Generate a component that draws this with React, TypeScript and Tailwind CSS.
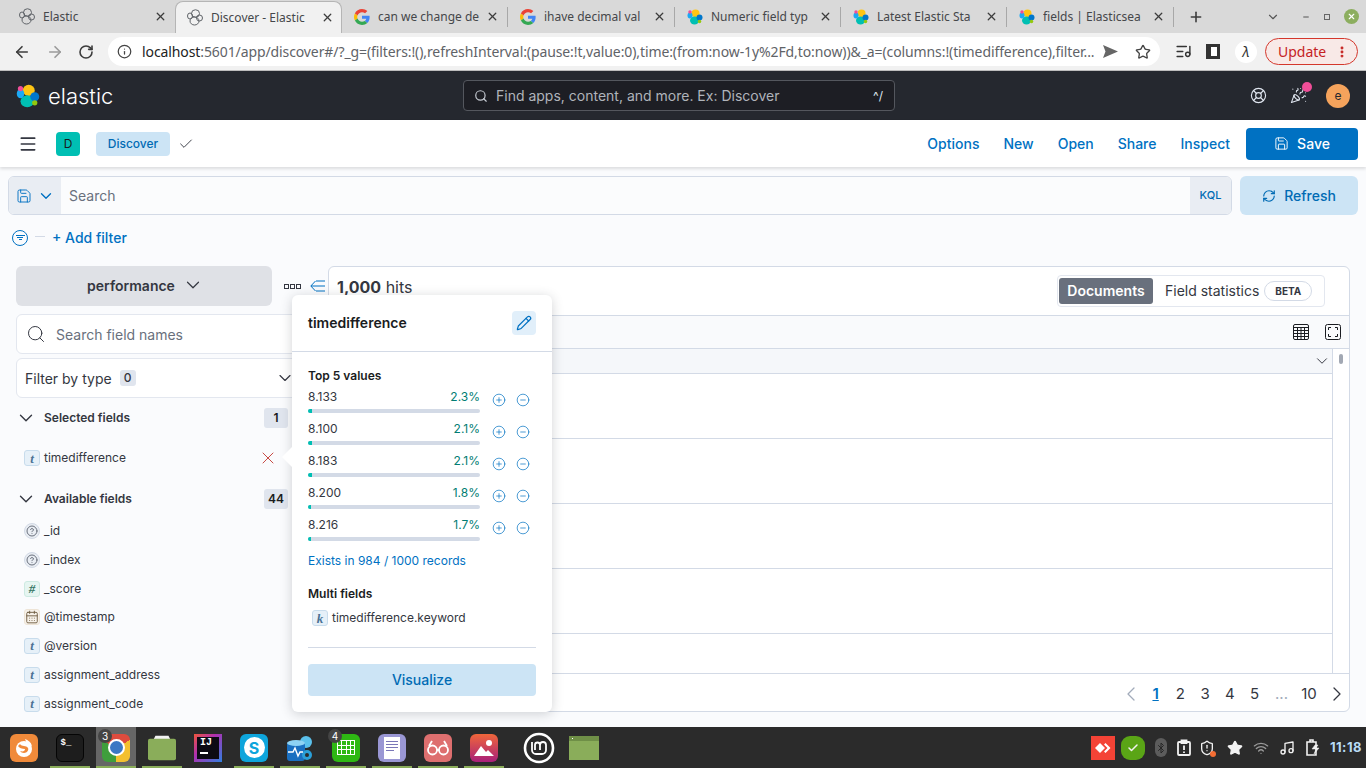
import React from "react";
import {
  ArrowLeft,
  ArrowRight,
  RotateCw,
  Info,
  Star,
  Plus,
  X,
  ChevronDown,
  ChevronLeft,
  ChevronRight,
  Search,
  Check,
  Menu,
  Save,
  RefreshCw,
  Pencil,
  CirclePlus,
  CircleMinus,
  LifeBuoy,
  PartyPopper,
  ListMusic,
  Bluetooth,
  Wifi,
  Music,
  ShieldAlert,
  CalendarDays,
  CircleHelp,
  EllipsisVertical,
  Minus,
} from "lucide-react";

const ElasticMark = ({ size = 16 }: { size?: number }) => (
  <svg width={size} height={size} viewBox="0 0 32 32">
    <ellipse cx="17" cy="8.500" rx="8" ry="7.500" fill="#FEC514" />
    <ellipse cx="15" cy="23" rx="9" ry="8" fill="#00BFB3" />
    <ellipse cx="6" cy="13" rx="5" ry="6" fill="#1BA9F5" />
    <ellipse cx="25" cy="17" rx="6" ry="6" fill="#0077CC" />
    <circle cx="6" cy="6" r="3.500" fill="#F04E98" />
    <circle cx="25" cy="25" r="3.500" fill="#93C90E" />
  </svg>
);

const ElasticOutline = () => (
  <svg width="16" height="17" viewBox="0 0 32 34" fill="none" stroke="#5f6368" strokeWidth="2">
    <ellipse cx="17" cy="9" rx="8" ry="7.500" />
    <ellipse cx="15" cy="24" rx="9" ry="8" />
    <ellipse cx="6" cy="14" rx="5" ry="6" />
    <ellipse cx="25" cy="18" rx="6" ry="6" />
  </svg>
);

const GoogleG = () => (
  <svg width="16" height="16" viewBox="0 0 48 48">
    <path fill="#EA4335" d="M24 9.500c3.500 0 6.700 1.200 9.200 3.600l6.900-6.900C35.900 2.400 30.400 0 24 0 14.600 0 6.500 5.400 2.600 13.200l8 6.200C12.500 13.700 17.800 9.500 24 9.500z" />
    <path fill="#4285F4" d="M46.900 24.500c0-1.600-.1-3.100-.4-4.500H24v9h12.900c-.6 3-2.200 5.500-4.800 7.200l7.700 6c4.500-4.200 7.100-10.300 7.100-17.700z" />
    <path fill="#FBBC05" d="M10.500 28.600c-.5-1.400-.8-3-.8-4.600s.3-3.200.8-4.600l-8-6.200C.9 16.500 0 20.100 0 24s.9 7.500 2.600 10.800l7.900-6.200z" />
    <path fill="#34A853" d="M24 48c6.500 0 11.900-2.100 15.900-5.800l-7.700-6c-2.200 1.500-4.900 2.300-8.100 2.300-6.200 0-11.500-4.200-13.400-9.900l-8 6.200C6.500 42.600 14.600 48 24 48z" />
  </svg>
);

type TabItem = { title: string; icon: "outline" | "google" | "elastic"; w: string; active?: boolean; first?: boolean };

const tabs: TabItem[] = [
  { title: "Elastic", icon: "outline", w: "w-[175px]", first: true },
  { title: "Discover - Elastic", icon: "outline", w: "w-[167px]", active: true },
  { title: "can we change de", icon: "google", w: "w-[166px]" },
  { title: "ihave decimal val", icon: "google", w: "w-[167px]" },
  { title: "Numeric field typ", icon: "elastic", w: "w-[166px]" },
  { title: "Latest Elastic Sta", icon: "elastic", w: "w-[166px]" },
  { title: "fields | Elasticsea", icon: "elastic", w: "w-[167px]" },
];

const BrowserTabs = () => (
  <div className="flex h-[33px] items-stretch bg-[#d9d9d9] text-[12px] text-[#45474a]">
    {tabs.map((t) => (
      <div
        key={t.title}
        className={
          t.active
            ? "mt-px flex items-center rounded-t-lg border border-b-0 border-[#b5b5b5] bg-[#f1f1f1] pl-[11px] pr-[7px] " + t.w
            : t.first
              ? "flex items-center pl-[19px] pr-[8px] " + t.w
              : "flex items-center pl-[12px] " + t.w
        }
      >
        {t.icon === "outline" && <ElasticOutline />}
        {t.icon === "google" && <GoogleG />}
        {t.icon === "elastic" && <ElasticMark />}
        <span className="ml-[8px] flex-1 overflow-hidden whitespace-nowrap">{t.title}</span>
        <X size={13} strokeWidth={2.4} className="ml-1 shrink-0 text-[#3c3c3c]" />
        {!t.active && !t.first && <div className="ml-[8px] h-[20px] w-px bg-[#a8a8a8]" />}
      </div>
    ))}
    <div className="ml-[14px] flex items-center">
      <Plus size={16} strokeWidth={2.4} className="text-[#3c3c3c]" />
    </div>
    <div className="ml-auto flex items-center pr-[7px] text-[#555]">
      <ChevronDown size={14} strokeWidth={2} />
      <Minus size={8} strokeWidth={3} className="ml-[22px]" />
      <div className="ml-[14px] h-[6px] w-[6px] border border-[#666]" />
      <div className="ml-[14px] flex h-[15px] w-[15px] items-center justify-center rounded-full bg-[#8cae5f] text-[#fff]">
        <X size={9} strokeWidth={3} />
      </div>
    </div>
  </div>
);

const AddressBar = () => (
  <div className="flex h-[38px] items-center border-b border-[#bdbdbd] bg-[#f1f1f1]">
    <ArrowLeft size={18} strokeWidth={2.2} className="ml-[13px] text-[#3c3c3c]" />
    <ArrowRight size={18} strokeWidth={2.2} className="ml-[15px] text-[#9a9a9a]" />
    <RotateCw size={16} strokeWidth={2.4} className="ml-[14px] text-[#3c3c3c]" />
    <div className="ml-[14px] flex h-[29px] w-[1052px] items-center rounded-full bg-white pl-[9px] pr-[9px]">
      <Info size={15} className="shrink-0 text-[#444]" />
      <div className="ml-[10px] flex-1 overflow-hidden whitespace-nowrap text-[14px] tracking-[-0.1px] text-[#5f6368]">
        <span className="text-[#222]">localhost</span>:5601/app/discover#/?_g=(filters:!(),refreshInterval:(pause:!t,value:0),time:(from:now-1y%2Fd,to:now))&amp;_a=(columns:!(timedifference),filter...
      </div>
      <svg width="15" height="13" viewBox="0 0 15 13" className="ml-[8px] shrink-0">
        <path d="M0 0 L15 6.500 L0 13 L2.500 6.500z" fill="#666" />
      </svg>
      <Star size={16} className="ml-[17px] shrink-0 text-[#444]" />
    </div>
    <ListMusic size={17} className="ml-[15px] text-[#333]" />
    <div className="ml-[14px] h-[15px] w-[14px] border-[3px] border-l-[5px] border-[#333] bg-white" />
    <div className="ml-[15px] flex h-[22px] w-[22px] items-center justify-center rounded-full bg-white text-[14px] italic text-[#333]">
      λ
    </div>
    <div className="ml-[8px] flex h-[27px] w-[93px] items-center justify-between rounded-full border border-[#d4372c] bg-[#f8e9e7] pl-[12px] pr-[8px] text-[14px] text-[#c5221f]">
      Update
      <EllipsisVertical size={14} strokeWidth={3} />
    </div>
  </div>
);

const ElasticHeader = () => (
  <div className="flex h-[49px] items-center bg-[#25282f] text-[#dfe5ef]">
    <div className="ml-4 h-6">
      <ElasticMark size={24} />
    </div>
    <span className="ml-[8px] w-[66px] text-[22px] font-light leading-none text-white">elastic</span>
    <div className="ml-[349px] flex h-[31px] w-[432px] items-center rounded-[4px] border border-[#54575e] bg-[#1d1e24] pl-[10px] pr-[11px]">
      <Search size={14} className="text-[#c7ccd4]" />
      <span className="ml-[8px] flex-1 text-[14px] text-[#b0b4bb]">Find apps, content, and more. Ex: Discover</span>
      <span className="text-[12px] text-[#dfe5ef]">^/</span>
    </div>
    <LifeBuoy size={17} strokeWidth={1.6} className="ml-[355px]" />
    <div className="relative ml-[23px]">
      <PartyPopper size={17} strokeWidth={1.5} />
      <div className="absolute -right-[5px] -top-[5px] h-[10px] w-[10px] rounded-full bg-[#f04e98]" />
    </div>
    <div className="ml-[19px] flex h-6 w-6 items-center justify-center rounded-full bg-[#f5a35c] text-[12px] text-[#25282f]">
      e
    </div>
  </div>
);

const KibanaNav = () => (
  <div className="relative z-10 flex h-[47px] items-center bg-white pr-2 shadow-[0_2px_3px_rgba(0,0,0,0.12)]">
    <Menu size={20} className="ml-[18px] text-[#343741]" />
    <div className="ml-[18px] flex h-6 w-6 items-center justify-center rounded-[4px] bg-[#00bfb3] text-[12px] text-[#1a1c21]">
      D
    </div>
    <div className="ml-[16px] flex h-6 w-[74px] items-center justify-center rounded-[4px] bg-[#cce4f5] text-[12px] font-medium text-[#006bb4]">
      Discover
    </div>
    <Check size={16} strokeWidth={1.4} className="ml-[8px] text-[#343741]" />
    <div className="ml-auto flex items-center text-[14px] font-medium text-[#0071c2]">
      <span>Options</span>
      <span className="ml-[24px]">New</span>
      <span className="ml-[24px]">Open</span>
      <span className="ml-[24px]">Share</span>
      <span className="ml-[24px]">Inspect</span>
      <div className="ml-[16px] flex h-8 w-[112px] items-center justify-center gap-[8px] rounded-[4px] bg-[#0071c2] text-white">
        <Save size={15} strokeWidth={1.5} />
        Save
      </div>
    </div>
  </div>
);

const QueryBar = () => (
  <div className="mx-2 mt-[9px] flex h-[39px] gap-2">
    <div className="flex flex-1 overflow-hidden rounded-[6px] border border-[#d3dae6] bg-white">
      <div className="flex w-[52px] items-center justify-center gap-[5px] bg-[#e9edf3] text-[#0071c2]">
        <Save size={16} strokeWidth={1.4} />
        <ChevronDown size={18} strokeWidth={1.8} />
      </div>
      <div className="flex flex-1 items-center bg-[#fbfcfd] pl-2 text-[14px] text-[#69707d]">Search</div>
      <div className="flex w-[41px] items-center justify-center bg-[#e9edf3] text-[11px] font-medium text-[#006bb4]">
        KQL
      </div>
    </div>
    <div className="flex w-[118px] items-center justify-center gap-[8px] rounded-[6px] bg-[#cce4f5] text-[14px] font-medium text-[#006bb4]">
      <RefreshCw size={14} />
      Refresh
    </div>
  </div>
);

const FilterRow = () => (
  <div className="ml-3 mt-[12px] flex h-[21px] items-center">
    <div className="flex h-4 w-4 items-center justify-center rounded-full border border-[#0071c2]">
      <div className="flex flex-col items-center gap-px">
        <div className="h-px w-[9px] bg-[#0071c2]" />
        <div className="h-px w-[6px] bg-[#0071c2]" />
        <div className="h-px w-[3px] bg-[#0071c2]" />
      </div>
    </div>
    <div className="mb-[3px] ml-[7px] h-px w-[10px] bg-[#d3dae6]" />
    <span className="ml-[7px] text-[14px] font-medium text-[#0071c2]">+ Add filter</span>
  </div>
);

type FieldType = "t" | "#" | "?" | "cal" | "k";

const FieldIcon = ({ type }: { type: FieldType }) => {
  if (type === "?")
    return (
      <div className="flex h-4 w-4 items-center justify-center rounded-full border border-[#d3dae6] bg-[#e9edf3]">
        <CircleHelp size={12} className="text-[#69707d]" />
      </div>
    );
  if (type === "cal")
    return (
      <div className="flex h-4 w-4 items-center justify-center rounded-[3px] border border-[#eee4d6] bg-[#f7f2ea]">
        <CalendarDays size={14} strokeWidth={1.6} className="text-[#6f5d42]" />
      </div>
    );
  const tone =
    type === "#"
      ? "border-[#cdeae2] bg-[#e6f5f1] text-[#387765]"
      : "border-[#c8dcec] bg-[#e6f0f8] text-[#4a7194]";
  return (
    <div
      className={
        "flex h-4 w-4 items-center justify-center rounded-[3px] border font-['Liberation_Serif',serif] text-[13px] font-bold italic leading-none " +
        tone
      }
    >
      {type}
    </div>
  );
};

const available: { name: string; type: FieldType; h: string }[] = [
  { name: "_id", type: "?", h: "h-[29px]" },
  { name: "_index", type: "?", h: "h-[29px]" },
  { name: "_score", type: "#", h: "h-[29px]" },
  { name: "@timestamp", type: "cal", h: "h-[28px]" },
  { name: "@version", type: "t", h: "h-[29px]" },
  { name: "assignment_address", type: "t", h: "h-[29px]" },
  { name: "assignment_code", type: "t", h: "h-[29px]" },
];

const Sidebar = () => (
  <div className="w-[312px] shrink-0 pl-4">
    <div className="flex h-10 w-[312px] items-center">
      <div className="flex h-10 w-[256px] shrink-0 items-center justify-center gap-[7px] rounded-[6px] bg-[#dfe1e6] pb-[2px] pl-[3px] text-[14px] font-semibold text-[#343741]">
        performance
        <ChevronDown size={22} strokeWidth={1.3} />
      </div>
      <div className="ml-[12px] flex shrink-0 items-center gap-px">
        <div className="h-[5px] w-[5px] border border-[#343741]" />
        <div className="h-[5px] w-[5px] border border-[#343741]" />
        <div className="h-[5px] w-[5px] border border-[#343741]" />
      </div>
      <svg width="15" height="12" viewBox="0 0 15 12" fill="none" stroke="#0071c2" className="ml-[9px] shrink-0">
        <path d="M5.500 1 L0.800 6 L5.500 11 M1 6H15 M6 1H15 M6 11H15" />
      </svg>
    </div>
    <div className="mt-2 flex h-10 w-[296px] items-center rounded-[6px] border border-[#e3e7ef] bg-white pl-[9px] text-[14px] text-[#69707d]">
      <Search size={20} strokeWidth={1.2} className="text-[#343741]" />
      <span className="ml-[10px]">Search field names</span>
    </div>
    <div className="mt-[4px] flex h-10 w-[296px] items-center rounded-[6px] border border-[#e3e7ef] bg-white pl-2 text-[14px] text-[#343741]">
      Filter by type
      <span className="ml-2 flex h-4 w-4 items-center justify-center rounded-[3px] bg-[#e0e5ee] text-[12px] font-medium">
        0
      </span>
      <ChevronDown size={20} strokeWidth={1.4} className="ml-[139px] shrink-0" />
    </div>
    <div className="mt-[10px] flex h-5 w-[272px] items-center text-[12px] font-semibold text-[#343741]">
      <ChevronDown size={22} strokeWidth={1.5} className="-ml-px" />
      <span className="ml-[7px]">Selected fields</span>
      <span className="ml-auto flex h-5 w-6 items-center justify-center rounded-[3px] bg-[#e0e5ee] text-[12px] text-[#1a1c21]">
        1
      </span>
    </div>
    <div className="mt-[20px] flex h-[20px] w-[272px] items-center pl-2 text-[12px] text-[#343741]">
      <FieldIcon type="t" />
      <span className="ml-[4px]">timedifference</span>
      <X size={20} strokeWidth={1} className="ml-auto mr-[10px] text-[#bd271e]" />
    </div>
    <div className="mt-[21px] flex h-5 w-[272px] items-center text-[12px] font-semibold text-[#343741]">
      <ChevronDown size={22} strokeWidth={1.5} className="-ml-px" />
      <span className="ml-[7px]">Available fields</span>
      <span className="ml-auto flex h-5 w-6 items-center justify-center rounded-[3px] bg-[#e0e5ee] text-[12px] text-[#1a1c21]">
        44
      </span>
    </div>
    <div className="mt-[7px]">
      {available.map((f) => (
        <div key={f.name} className={"flex items-center pl-2 text-[12px] text-[#343741] " + f.h}>
          <FieldIcon type={f.type} />
          <span className="ml-[4px]">{f.name}</span>
        </div>
      ))}
    </div>
  </div>
);

const topValues = [
  { v: "8.133", p: "2.3%", w: "w-[4px]" },
  { v: "8.100", p: "2.1%", w: "w-[4px]" },
  { v: "8.183", p: "2.1%", w: "w-[4px]" },
  { v: "8.200", p: "1.8%", w: "w-[3px]" },
  { v: "8.216", p: "1.7%", w: "w-[3px]" },
];

const FieldPopover = () => (
  <div className="absolute left-[292px] top-[295px] z-20 h-[417px] w-[260px] rounded-[6px] bg-white shadow-[0_2px_12px_rgba(52,55,65,0.22)]">
    <div className="absolute -left-[10px] top-[152px] h-0 w-0 border-y-[10px] border-r-[10px] border-y-transparent border-r-white" />
    <div className="flex h-[57px] items-center justify-between border-b border-[#d3dae6] px-4">
      <span className="pb-[2px] text-[14px] font-semibold text-[#1a1c21]">timedifference</span>
      <div className="flex h-6 w-6 items-center justify-center rounded-[4px] bg-[#e1effa] text-[#0071c2]">
        <Pencil size={16} strokeWidth={1.8} />
      </div>
    </div>
    <div className="px-4">
      <div className="mt-[16px] text-[12px] font-semibold leading-[16px] text-[#1a1c21]">Top 5 values</div>
      <div className="mt-[4px]">
        {topValues.map((r) => (
          <div key={r.v} className="flex h-[32px]">
            <div className="w-[172px]">
              <div className="flex h-[18px] items-center justify-between text-[12px]">
                <span className="text-[#343741]">{r.v}</span>
                <span className="text-[#017d73]">{r.p}</span>
              </div>
              <div className="mt-[3px] h-1 overflow-hidden rounded-full bg-[#d3dae6]">
                <div className={"h-1 bg-[#00bfb3] " + r.w} />
              </div>
            </div>
            <div className="ml-[12px] mt-[4px] flex h-4 items-center gap-[10px] text-[#0071c2]">
              <CirclePlus size={14} strokeWidth={1.2} />
              <CircleMinus size={14} strokeWidth={1.2} />
            </div>
          </div>
        ))}
      </div>
      <div className="mt-[5px] text-[12px] leading-[16px] text-[#0071c2]">Exists in 984 / 1000 records</div>
      <div className="mt-[17px] text-[12px] font-semibold leading-[16px] text-[#1a1c21]">Multi fields</div>
      <div className="ml-1 mt-[8px] flex h-4 items-center text-[12px] text-[#343741]">
        <FieldIcon type="k" />
        <span className="ml-[4px]">timedifference.keyword</span>
      </div>
      <div className="mt-[21px] h-px bg-[#d3dae6]" />
      <div className="mt-4 flex h-8 items-center justify-center rounded-[4px] bg-[#cce4f5] pb-[2px] text-[14px] font-medium text-[#006bb4]">
        Visualize
      </div>
    </div>
  </div>
);

const rowHeights = ["h-[65px]", "h-[65px]", "h-[65px]", "h-[65px]", "h-[40px]"];

const ResultCard = () => (
  <div className="ml-4 flex h-[446px] w-[1022px] shrink-0 flex-col rounded-[6px] border border-[#d3dae6] bg-white">
    <div className="flex h-[49px] items-center border-b border-[#d3dae6] pl-2 pr-[24px] text-[#343741]">
      <span className="mb-[8px] text-[16px]">
        <span className="font-bold">1,000</span> hits
      </span>
      <div className="ml-auto flex h-[32px] w-[268px] items-center rounded-[4px] border border-[#e3e7ef] pl-[1px] text-[14px]">
        <div className="flex h-[26px] w-[94px] items-center justify-center rounded-[3px] bg-[#69707d] pb-[2px] font-semibold text-white">
          Documents
        </div>
        <span className="ml-[12px] pb-[2px]">Field statistics</span>
        <span className="ml-[5px] flex h-5 w-[48px] items-center justify-center rounded-full border border-[#d3dae6] text-[10px] font-bold">
          BETA
        </span>
      </div>
    </div>
    <div className="flex h-[33px] items-center justify-end border-b border-[#d3dae6] bg-[#f9fafc] pr-[8px] text-[#1a1c21]">
      <svg width="16" height="16" viewBox="0 0 16 16" fill="none" stroke="#1a1c21">
        <rect x="0.500" y="0.500" width="15" height="15" rx="1.500" />
        <path d="M1 3.500H15 M1 6.500H15 M1 9.500H15 M1 12.500H15 M4.500 3.500V15 M8 3.500V15 M11.500 3.500V15" />
      </svg>
      <svg width="16" height="16" viewBox="0 0 16 16" fill="none" stroke="#1a1c21" className="ml-[16px]">
        <rect x="0.500" y="0.500" width="15" height="15" rx="2" />
        <path d="M3.500 6V3.500H6 M10 3.500H12.500V6 M3.500 10V12.500H6 M10 12.500H12.500V10" />
      </svg>
    </div>
    <div className="flex flex-1 overflow-hidden">
      <div className="flex-1">
        <div className="flex h-[25px] items-center justify-end border-b border-[#d3dae6] bg-[#f5f7fa] pr-px text-[#343741]">
          <ChevronDown size={18} strokeWidth={1.3} />
        </div>
        {rowHeights.map((h, i) => (
          <div key={i} className={"border-b border-[#d3dae6] " + h} />
        ))}
      </div>
      <div className="relative w-[17px] border-b border-l border-[#d3dae6] bg-white">
        <div className="absolute left-[6px] top-[5px] h-[10px] w-[4px] rounded-full bg-[#a2a8b3]" />
      </div>
    </div>
    <div className="flex h-[37px] items-center justify-end pt-[3px] text-[15px] text-[#343741]">
      <ChevronLeft size={24} strokeWidth={1.3} className="text-[#a2abba]" />
      <span className="w-[24.75px] text-center font-semibold text-[#0071c2] underline">1</span>
      <span className="w-[24.75px] text-center">2</span>
      <span className="w-[24.75px] text-center">3</span>
      <span className="w-[24.75px] text-center">4</span>
      <span className="w-[24.75px] text-center">5</span>
      <span className="w-[29px] text-center text-[#a2abba]">...</span>
      <span className="w-[26px] text-center">10</span>
      <ChevronRight size={24} strokeWidth={1.3} className="ml-[3px]" />
    </div>
  </div>
);

const Tile = ({ cls, children }: { cls: string; children?: React.ReactNode }) => (
  <div className={"flex h-[28px] w-[28px] items-center justify-center rounded-[6px] " + cls}>{children}</div>
);

const dock: { cls: string; active: boolean; badge?: string; content: React.ReactNode; highlight?: boolean }[] = [
  {
    cls: "bg-[#f08a3a]",
    active: false,
    content: (
      <svg width="20" height="20" viewBox="0 0 20 20">
        <circle cx="10" cy="11" r="8" fill="#fff" />
        <path d="M6 6c2 3 6 1 8 4 1 2-1 5-4 5-2 0-3-1-4-2 3 1 5 0 5-2-3 0-6-1-7-3z" fill="#f08a3a" />
        <path d="M11 1c3 1 6 3 7 7l-5-2z" fill="#fff" />
      </svg>
    ),
  },
  {
    cls: "bg-[#1d1d1d] border border-[#050505]",
    active: true,
    content: <span className="mb-2 mr-2 font-['Liberation_Mono',monospace] text-[9px] font-bold text-white">$_</span>,
  },
  {
    cls: "bg-[conic-gradient(from_-60deg,#dd4b3e_0_120deg,#f3c02f_120deg_240deg,#3f9e3c_240deg)]",
    active: true,
    highlight: true,
    badge: "3",
    content: <div className="h-[17px] w-[17px] rounded-full border-2 border-white bg-[#3b78c4]" />,
  },
  {
    cls: "bg-transparent",
    active: true,
    content: (
      <svg width="30" height="26" viewBox="0 0 30 26">
        <path d="M8 0h14l2 4H6z" fill="#f2f2f2" />
        <rect x="0" y="3" width="30" height="23" rx="2" fill="#8aad5a" />
      </svg>
    ),
  },
  {
    cls: "rounded-none bg-[linear-gradient(135deg,#f0563a,#b02fb0_40%,#2f7fe0)] p-[3px]",
    active: false,
    content: (
      <div className="flex h-full w-full flex-col bg-[#0d0a14] pl-[3px] font-['Liberation_Mono',monospace] text-[10px] font-bold leading-[12px] text-white">
        IJ
        <div className="mt-[3px] h-[2px] w-[8px] bg-white" />
      </div>
    ),
  },
  {
    cls: "bg-[#0ea5dc]",
    active: true,
    content: (
      <div className="flex h-[21px] w-[21px] items-center justify-center rounded-full bg-white text-[16px] font-bold leading-none text-[#0ea5dc]">
        S
      </div>
    ),
  },
  {
    cls: "bg-transparent",
    active: true,
    content: (
      <svg width="30" height="30" viewBox="0 0 28 28">
        <circle cx="20" cy="8" r="6" fill="#5bc0eb" />
        <rect x="1" y="8" width="18" height="19" rx="3" fill="#1a6fc0" />
        <ellipse cx="10" cy="9" rx="9" ry="3" fill="#8fd3f4" />
        <circle cx="21" cy="21" r="5" fill="#2a9fd8" />
        <circle cx="21" cy="21" r="2" fill="#2b2b2b" />
        <path d="M2 18h5l2-4 3 8 2-4h3" stroke="#fff" strokeWidth="1.400" fill="none" />
      </svg>
    ),
  },
  {
    cls: "bg-[#2eb813]",
    active: true,
    badge: "4",
    content: (
      <div className="grid h-[15px] w-[18px] grid-cols-4 gap-px border border-white bg-white">
        {Array.from({ length: 12 }).map((_, i) => (
          <div key={i} className="bg-[#2eb813]" />
        ))}
      </div>
    ),
  },
  {
    cls: "bg-[#9a97d4]",
    active: true,
    content: (
      <div className="flex h-[22px] w-[16px] flex-col gap-[2px] bg-white p-[2px] pt-[4px]">
        <div className="h-px bg-[#7a77b8]" />
        <div className="h-px bg-[#7a77b8]" />
        <div className="h-px bg-[#7a77b8]" />
        <div className="h-px w-2 bg-[#7a77b8]" />
      </div>
    ),
  },
  {
    cls: "bg-[#de6f6f]",
    active: true,
    content: (
      <svg width="24" height="18" viewBox="0 0 24 18" fill="none" stroke="#fff" strokeWidth="1.800">
        <circle cx="6.500" cy="11" r="4.500" />
        <circle cx="17.500" cy="11" r="4.500" />
        <path d="M11 11h2M3 7l3-5M21 7l-3-5" />
      </svg>
    ),
  },
  {
    cls: "bg-[linear-gradient(#f0663a,#a81f7a)]",
    active: true,
    content: (
      <svg width="22" height="20" viewBox="0 0 22 20" fill="#fff">
        <circle cx="16" cy="5" r="3" />
        <path d="M1 18l7-10 5 6 2-2 6 6z" />
      </svg>
    ),
  },
];

const Taskbar = () => (
  <div className="absolute bottom-0 left-0 right-0 z-30 flex h-[41px] bg-[#2b2b2b]">
    <div className="ml-[4px] flex items-center">
      <div className="flex gap-[6px]">
        {dock.map((d, i) => (
          <div
            key={i}
            className={
              d.highlight
                ? "relative flex h-[41px] w-[40px] items-center justify-center bg-[#666666]"
                : "relative flex h-[41px] w-[40px] items-center justify-center"
            }
          >
            <Tile cls={d.cls}>{d.content}</Tile>
            {d.badge && (
              <span className="absolute left-[2px] top-[2px] flex h-[14px] w-[14px] items-center justify-center rounded-full bg-[#444] text-[10px] text-white">
                {d.badge}
              </span>
            )}
            {d.active && <div className="absolute bottom-0 left-0 right-0 h-[2px] bg-[#8aad5a]" />}
          </div>
        ))}
      </div>
      <svg width="32" height="32" viewBox="0 0 32 32" fill="none" stroke="#fff" className="ml-[19px]">
        <circle cx="16" cy="16" r="14" strokeWidth="2.600" />
        <path d="M9 10v8a4 4 0 0 0 4 4h6a4 4 0 0 0 4-4v-5a3 3 0 0 0-6 0v5M17 13a2.500 2.500 0 0 0-5 0v5" strokeWidth="1.800" />
      </svg>
      <div className="ml-[14px] h-[24px] w-[30px] bg-[#8aad5a]">
        <div className="h-[5px] bg-[#6f8f47] pl-[3px] pt-[2px]">
          <div className="h-px w-px bg-white" />
        </div>
      </div>
    </div>
    <div className="ml-auto flex items-center pr-[4px] text-[#f2f2f2]">
      <div className="flex h-6 w-6 items-center justify-center bg-[#f44336]">
        <svg width="16" height="10" viewBox="0 0 16 10" fill="#fff">
          <path d="M5 0l5 5-5 5-5-5z" />
          <path d="M10.500 0l5 5-5 5-1.500-1.500L12.500 5 9 1.500z" />
        </svg>
      </div>
      <div className="ml-[6px] flex h-6 w-6 items-center justify-center rounded-[9px] bg-[#5aa516]">
        <Check size={12} strokeWidth={3} />
      </div>
      <div className="ml-[10px] flex h-[19px] w-[12px] items-center justify-center rounded-full bg-[#5c5c5c]">
        <Bluetooth size={12} className="text-[#262626]" />
      </div>
      <svg width="14" height="17" viewBox="0 0 14 17" fill="none" stroke="#f2f2f2" strokeWidth="1.800" className="ml-[10px]">
        <rect x="1" y="3" width="12" height="13" rx="1" />
        <path d="M4.500 1.500h5V4h-5z" fill="#f2f2f2" />
        <path d="M7 6.500v4.500M7 12.500v1.500" />
      </svg>
      <div className="relative ml-[8px]">
        <ShieldAlert size={16} />
        <div className="absolute -bottom-px -right-px h-[6px] w-[6px] rounded-full bg-[#f36d33]" />
      </div>
      <Star size={16} className="ml-[12px] fill-current" />
      <Wifi size={16} className="ml-[10px] text-[#9a9a9a]" />
      <Music size={16} className="ml-[10px]" />
      <svg width="14" height="17" viewBox="0 0 14 17" fill="none" stroke="#f2f2f2" strokeWidth="1.600" className="ml-[11px]">
        <path d="M1 3h9v13H1z M4 3V1h3v2" />
        <path d="M9 6l-3 4h4l-2 5 5-6h-3l2-3z" fill="#f2f2f2" strokeWidth="0.500" />
      </svg>
      <span className="ml-[10px] text-[13px] font-bold tracking-[0.5px] text-[#b9dcf5]">11:18</span>
    </div>
  </div>
);

export default function App() {
  return (
    <div className="relative h-[768px] w-[1366px] overflow-hidden bg-[#fafbfd] font-['Inter',sans-serif]">
      <div className="font-['Noto_Sans',sans-serif]">
        <BrowserTabs />
        <AddressBar />
      </div>
      <ElasticHeader />
      <KibanaNav />
      <QueryBar />
      <FilterRow />
      <div className="mt-[18px] flex">
        <Sidebar />
        <ResultCard />
      </div>
      <FieldPopover />
      <Taskbar />
    </div>
  );
}
